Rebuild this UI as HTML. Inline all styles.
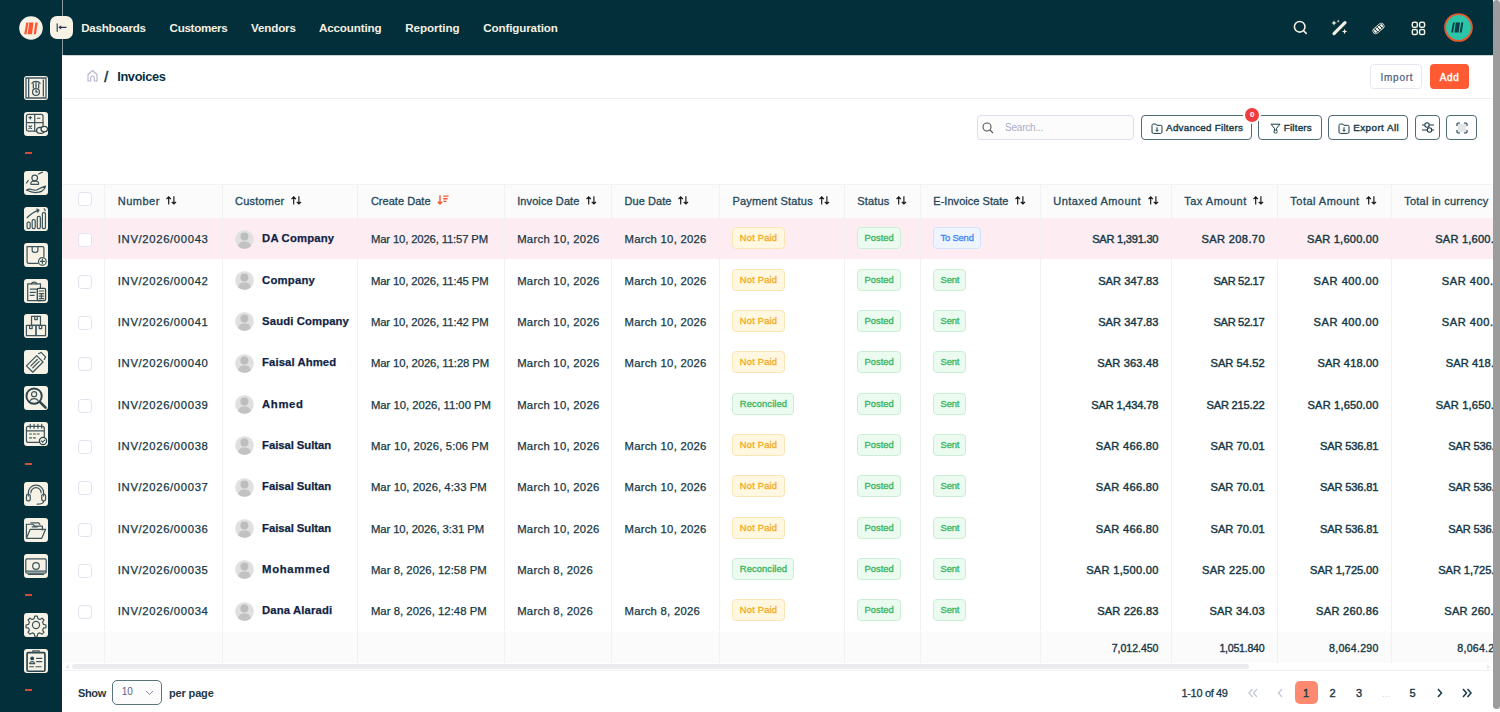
<!DOCTYPE html><html><head><meta charset="utf-8"><style>
*{box-sizing:border-box;margin:0;padding:0}
html,body{width:1500px;height:712px;overflow:hidden;background:#fff;font-family:"Liberation Sans",sans-serif}
.abs{position:absolute}
.t{white-space:pre}
#sb{position:absolute;left:0;top:0;width:62px;height:712px;background:#032f3b}
#hd{position:absolute;left:62px;top:0;width:1431px;height:54.5px;background:#032f3b;box-shadow:0 0.5px 1px rgba(0,30,40,.2)}
.nav{position:absolute;top:19.5px;color:#f5f0e3;font-size:11.6px;font-weight:700;line-height:16px;white-space:nowrap}
.sic{position:absolute;left:24px;width:24px;height:24px;background:#f6f2e5;border-radius:3px}
.sic svg{position:absolute;left:0;top:0}
.dash{position:absolute;left:25.1px;width:6.9px;height:2.4px;background:#d44c36}
#vsb{position:absolute;left:1493px;top:0;width:7px;height:708.5px;background:#9c9c9c;border-radius:3.5px}
.tb{position:absolute;top:115.3px;height:25px;border:1.3px solid #4f6c74;border-radius:4px;background:#fff;color:#173a46;font-size:9.8px;font-weight:400;line-height:24px;white-space:nowrap;-webkit-text-stroke:0.4px #173a46}
.tb svg{position:absolute}
#tbl{position:absolute;left:62px;top:184px;width:1431px;height:479px;overflow:hidden}
.row{position:absolute;left:0;width:1457px;display:flex}
.c{flex:none;position:relative;height:100%;border-left:1px solid #f1f1f4;display:flex;align-items:center;padding:0 12.4px;white-space:nowrap;overflow:hidden}
.c:first-child{border-left:none;justify-content:center;padding:0}
.th .c{color:#24475a;font-size:11px;line-height:14px;padding-top:1px;-webkit-text-stroke:0.3px #24475a}
.tr .c{color:#163846;font-size:11.3px;line-height:14px;padding-top:2px;-webkit-text-stroke:0.25px #163846}
.r{justify-content:flex-end}
.amt{font-weight:400;font-size:11.1px;-webkit-text-stroke:0.42px #173a46}
.si{margin-left:6.5px;flex:none;margin-top:-2px}
.cb{width:14px;height:14px;border:1px solid #e2e2ee;border-radius:3.5px;background:#fff;position:relative;left:1.8px;top:1px}
.th .cb{top:-2.3px}
.av{flex:none;margin-right:8px;margin-top:0px}
.cn{font-weight:700;color:#131a45;font-size:11.3px;position:relative;top:-1px}
.bd{display:inline-block;height:22px;line-height:20px;border:1px solid;border-radius:4px;font-size:9.4px;padding:0 6.3px;font-weight:400;margin-top:-2px;-webkit-text-stroke:0.3px currentColor}
.np{background:#fff7df;border-color:#fbe6b3;color:#f3ab22}
.gr{background:#ebfbef;border-color:#cdeed6;color:#36b45e}
.bl{background:#eef5ff;border-color:#d3e2fa;color:#3f86f2}
.pg{position:absolute;top:681.3px;width:23px;height:23px;line-height:24px;text-align:center;font-size:11px;color:#1d3a46;font-weight:400;-webkit-text-stroke:0.4px #1d3a46}
.tot{-webkit-text-stroke:0.35px #173a46;font-size:10.6px}
</style></head><body>

<div id="sb">
<div class="sic" style="top:76px"><svg width="24" height="24" viewBox="3 3 18 18"><path d="M4.5 4.5h15v15h-15z" fill="none" stroke="#3d555d" stroke-width="0.95" stroke-linecap="round" stroke-linejoin="round"/><path d="M6.5 5v14M17.5 6v12M9 8.5c1-2 5-2 6 0M10 9v3M12 8v4M14 9v3" fill="none" stroke="#3d555d" stroke-width="0.95" stroke-linecap="round" stroke-linejoin="round"/><circle cx="12" cy="15" r="2.6" fill="none" stroke="#3d555d" stroke-width="0.95" stroke-linecap="round" stroke-linejoin="round"/><path d="M12 13.6v1.4h1" fill="none" stroke="#3d555d" stroke-width="0.95" stroke-linecap="round" stroke-linejoin="round"/></svg></div>
<div class="sic" style="top:111.7px"><svg width="24" height="24" viewBox="2.6 2.6 18.8 18.8"><rect x="4.5" y="4.5" width="13" height="13" rx="1.5" fill="none" stroke="#3d555d" stroke-width="0.95" stroke-linecap="round" stroke-linejoin="round"/><path d="M11 4.5v13M4.5 11h13M6.5 7h2M7.5 6v2M13 7.5h2M6.5 13.5l2 2M8.5 13.5l-2 2" fill="none" stroke="#3d555d" stroke-width="0.95" stroke-linecap="round" stroke-linejoin="round"/><ellipse cx="15.5" cy="17" rx="3" ry="2.3" fill="#f6f2e5" stroke="#2c4650"/><ellipse cx="18.5" cy="16" rx="2.6" ry="2.1" fill="#f6f2e5" stroke="#2c4650"/></svg></div>
<div class="sic" style="top:171px"><svg width="24" height="24" viewBox="2.6 2.6 18.8 18.8"><circle cx="11" cy="8" r="2.2" fill="none" stroke="#3d555d" stroke-width="0.95" stroke-linecap="round" stroke-linejoin="round"/><path d="M8 12c0-2 6-2 6 0v1H8z" fill="none" stroke="#3d555d" stroke-width="0.95" stroke-linecap="round" stroke-linejoin="round"/><path d="M4.5 17.5c3-2 6 1 8 0s4-2 7-3c-1 3-4 5-8 5-3 0-5-1-7-2z" fill="none" stroke="#3d555d" stroke-width="0.95" stroke-linecap="round" stroke-linejoin="round"/><path d="M14 5l3-1.5M6 10l-1.5 2" fill="none" stroke="#3d555d" stroke-width="0.95" stroke-linecap="round" stroke-linejoin="round"/></svg></div>
<div class="sic" style="top:207px"><svg width="24" height="24" viewBox="2.6 2.6 18.8 18.8"><rect x="5" y="14.5" width="2.4" height="5" rx="1" fill="none" stroke="#3d555d" stroke-width="0.95" stroke-linecap="round" stroke-linejoin="round"/><rect x="9" y="12.5" width="2.4" height="7" rx="1" fill="none" stroke="#3d555d" stroke-width="0.95" stroke-linecap="round" stroke-linejoin="round"/><rect x="13" y="10" width="2.4" height="9.5" rx="1" fill="none" stroke="#3d555d" stroke-width="0.95" stroke-linecap="round" stroke-linejoin="round"/><rect x="17" y="7" width="2.4" height="12.5" rx="1" fill="none" stroke="#3d555d" stroke-width="0.95" stroke-linecap="round" stroke-linejoin="round"/><path d="M5 11c3-3 6-5 9-6M12.5 4.2l1.8.8-1 1.6M18.5 4l.7 1.5" fill="none" stroke="#3d555d" stroke-width="0.95" stroke-linecap="round" stroke-linejoin="round"/></svg></div>
<div class="sic" style="top:242.7px"><svg width="24" height="24" viewBox="2.6 2.6 18.8 18.8"><path d="M5 5.5h12c.8 0 1.2.5 1.2 1.2v6.5M5 5.5v11.5c0 .8.5 1.5 1.5 1.5h7" fill="none" stroke="#3d555d" stroke-width="0.95" stroke-linecap="round" stroke-linejoin="round"/><path d="M9 6v2.5c0 2 4.5 2 4.5 0V6" fill="none" stroke="#3d555d" stroke-width="0.95" stroke-linecap="round" stroke-linejoin="round"/><circle cx="17" cy="17" r="3" fill="none" stroke="#3d555d" stroke-width="0.95" stroke-linecap="round" stroke-linejoin="round"/><path d="M17 15.5v3M15.5 17h3" fill="none" stroke="#3d555d" stroke-width="0.95" stroke-linecap="round" stroke-linejoin="round"/></svg></div>
<div class="sic" style="top:278.6px"><svg width="24" height="24" viewBox="2.6 2.6 18.8 18.8"><path d="M5.5 6.5h10v13h-10z" fill="none" stroke="#3d555d" stroke-width="0.95" stroke-linecap="round" stroke-linejoin="round"/><path d="M8.5 6.5c0-2 4-2 4 0M7.5 10.5h5M7.5 13h4M7.5 15.5h3" fill="none" stroke="#3d555d" stroke-width="0.95" stroke-linecap="round" stroke-linejoin="round"/><rect x="13" y="10" width="6.5" height="9.5" rx="1" fill="#f6f2e5" stroke="#2c4650"/><path d="M14.5 12h3.5M14.5 14h3.5M14.5 16h3.5M14.5 18h3.5M16.2 14v4" fill="none" stroke="#3d555d" stroke-width="0.95" stroke-linecap="round" stroke-linejoin="round"/></svg></div>
<div class="sic" style="top:314.4px"><svg width="24" height="24" viewBox="2.6 2.6 18.8 18.8"><rect x="8.5" y="4.5" width="7" height="7" fill="none" stroke="#3d555d" stroke-width="0.95" stroke-linecap="round" stroke-linejoin="round"/><rect x="4.5" y="11.5" width="7.5" height="8" fill="none" stroke="#3d555d" stroke-width="0.95" stroke-linecap="round" stroke-linejoin="round"/><rect x="12" y="11.5" width="7.5" height="8" fill="none" stroke="#3d555d" stroke-width="0.95" stroke-linecap="round" stroke-linejoin="round"/><path d="M11 4.5v2.5h2V4.5M7 11.5v2.5h2v-2.5M14.5 11.5v2.5h2v-2.5" fill="none" stroke="#3d555d" stroke-width="0.95" stroke-linecap="round" stroke-linejoin="round"/></svg></div>
<div class="sic" style="top:350.2px"><svg width="24" height="24" viewBox="2.6 2.6 18.8 18.8"><path d="M4.5 15l8-8 5 5-8 8z" fill="none" stroke="#3d555d" stroke-width="0.95" stroke-linecap="round" stroke-linejoin="round"/><path d="M14 5.5l2-1 3.5 3.5-1 2M8 15l5-5M9.5 16.5l5-5" fill="none" stroke="#3d555d" stroke-width="0.95" stroke-linecap="round" stroke-linejoin="round"/></svg></div>
<div class="sic" style="top:386px"><svg width="24" height="24" viewBox="2.6 2.6 18.8 18.8"><circle cx="10.5" cy="10.5" r="6" stroke="#2c4650" stroke-width="1.5" fill="none"/><path d="M15 15l4.5 4.5" stroke="#2c4650" stroke-width="2" stroke-linecap="round"/><circle cx="10.5" cy="9" r="2" fill="none" stroke="#3d555d" stroke-width="0.95" stroke-linecap="round" stroke-linejoin="round"/><path d="M7.5 14c1-2 5-2 6 0" fill="none" stroke="#3d555d" stroke-width="0.95" stroke-linecap="round" stroke-linejoin="round"/></svg></div>
<div class="sic" style="top:421.8px"><svg width="24" height="24" viewBox="2.6 2.6 18.8 18.8"><rect x="4.5" y="6" width="14" height="12.5" rx="1.5" fill="none" stroke="#3d555d" stroke-width="0.95" stroke-linecap="round" stroke-linejoin="round"/><path d="M4.5 9.5h14M7.5 4.5v3M10.5 4.5v3M13.5 4.5v3M16.5 4.5v3M7 12h1.5M10 12h1.5M13 12h1.5M7 15h1.5M10 15h1.5" fill="none" stroke="#3d555d" stroke-width="0.95" stroke-linecap="round" stroke-linejoin="round"/><circle cx="17.5" cy="17.5" r="2.8" fill="#f6f2e5" stroke="#2c4650"/><path d="M16.3 17.5l.9.9 1.6-1.6" fill="none" stroke="#3d555d" stroke-width="0.95" stroke-linecap="round" stroke-linejoin="round"/></svg></div>
<div class="sic" style="top:481.7px"><svg width="24" height="24" viewBox="2.6 2.6 18.8 18.8"><path d="M6 13.5V11a6 6 0 0 1 12 0v2.5" fill="none" stroke="#3d555d" stroke-width="0.95" stroke-linecap="round" stroke-linejoin="round"/><rect x="4.5" y="12" width="3" height="5.5" rx="1.5" fill="none" stroke="#3d555d" stroke-width="0.95" stroke-linecap="round" stroke-linejoin="round"/><rect x="16.5" y="12" width="3" height="5.5" rx="1.5" fill="none" stroke="#3d555d" stroke-width="0.95" stroke-linecap="round" stroke-linejoin="round"/><path d="M18 17.5c0 2-2 2.5-5 2.5" fill="none" stroke="#3d555d" stroke-width="0.95" stroke-linecap="round" stroke-linejoin="round"/><path d="M8 11a4 4 0 0 1 8 0" fill="none" stroke="#3d555d" stroke-width="0.95" stroke-linecap="round" stroke-linejoin="round"/></svg></div>
<div class="sic" style="top:517.7px"><svg width="24" height="24" viewBox="2.6 2.6 18.8 18.8"><path d="M4.5 7.5h5l1.5 1.5h6v3" fill="none" stroke="#3d555d" stroke-width="0.95" stroke-linecap="round" stroke-linejoin="round"/><path d="M4.5 7.5v11h12l3-7h-12l-3 7" fill="none" stroke="#3d555d" stroke-width="0.95" stroke-linecap="round" stroke-linejoin="round"/><path d="M8 6.5h6l1 1M9 9.5h4" fill="none" stroke="#3d555d" stroke-width="0.95" stroke-linecap="round" stroke-linejoin="round"/></svg></div>
<div class="sic" style="top:553.6px"><svg width="24" height="24" viewBox="2.6 2.6 18.8 18.8"><rect x="4" y="6.5" width="16" height="11" rx="1" fill="none" stroke="#3d555d" stroke-width="0.95" stroke-linecap="round" stroke-linejoin="round"/><circle cx="12" cy="12" r="2.6" fill="none" stroke="#3d555d" stroke-width="0.95" stroke-linecap="round" stroke-linejoin="round"/><path d="M4.5 16h15M6 18.5h12" fill="none" stroke="#3d555d" stroke-width="0.95" stroke-linecap="round" stroke-linejoin="round"/></svg></div>
<div class="sic" style="top:613px"><svg width="24" height="24" viewBox="2.6 2.6 18.8 18.8"><path d="M11 5h2l.5 2 1.5.7 1.8-1 1.4 1.4-1 1.8.6 1.6 2 .5v2l-2 .5-.6 1.5 1 1.8-1.4 1.4-1.8-1-1.5.6-.5 2h-2l-.5-2-1.5-.6-1.8 1-1.4-1.4 1-1.8-.6-1.5-2-.5v-2l2-.5.6-1.6-1-1.8 1.4-1.4 1.8 1 1.5-.7z" fill="none" stroke="#3d555d" stroke-width="0.95" stroke-linecap="round" stroke-linejoin="round"/><circle cx="12" cy="12" r="2.8" fill="none" stroke="#3d555d" stroke-width="0.95" stroke-linecap="round" stroke-linejoin="round"/></svg></div>
<div class="sic" style="top:649px"><svg width="24" height="24" viewBox="2.6 2.6 18.8 18.8"><rect x="5" y="5.5" width="14" height="14.5" rx="1" stroke="#2c4650" stroke-width="1.3" fill="none"/><path d="M9.5 5.5V4h5v1.5" fill="none" stroke="#3d555d" stroke-width="0.95" stroke-linecap="round" stroke-linejoin="round"/><circle cx="9" cy="10" r="1.5" fill="#2c4650"/><path d="M7 14c.5-2 3.5-2 4 0zM12.5 10h4M12.5 12.5h4M7 16.5h3M12 16.5h4" fill="none" stroke="#3d555d" stroke-width="0.95" stroke-linecap="round" stroke-linejoin="round"/></svg></div>
<div class="dash" style="top:151.7px"></div>
<div class="dash" style="top:462.5px"></div>
<div class="dash" style="top:593.7px"></div>
<div class="dash" style="top:689px"></div>
</div>
<div id="hd"></div><div class="abs" style="left:0;top:0;width:1493px;height:54.5px">
<div class="abs" style="left:61.5px;top:0;width:1px;height:54.5px;background:#8c9ca2"></div>
<svg class="abs" style="left:19.4px;top:15.7px" width="24" height="24" viewBox="0 0 24 24"><circle cx="12" cy="12" r="11.8" fill="#f6f2e5"/><path d="M7.3 6.5h2.2L7.5 18.3H5.2z M10.2 6.5h4.4l-1.6 11.8H8.6z M16.4 6.5h2.3l-1.7 11.8h-2.3z" fill="#ff5533"/></svg>
<div class="abs" style="left:50.1px;top:15.9px;width:23.4px;height:23.6px;border-radius:7px;background:#f6f2e5"></div>
<svg class="abs" style="left:50.1px;top:15.9px" width="24" height="24" viewBox="0 0 24 24"><path d="M7.2 7.4v8.4M16.5 11.4H9" fill="none" stroke="#1d3350" stroke-width="1.1"/><path d="M8.4 11.4l2.8-2.2v4.4z" fill="#1d3350"/></svg>
<div class="nav" style="left:81.2px"><span id="t1" class="t " style="letter-spacing:-0.246px;">Dashboards</span></div>
<div class="nav" style="left:169.6px"><span id="t2" class="t " style="letter-spacing:-0.308px;">Customers</span></div>
<div class="nav" style="left:251.0px"><span id="t3" class="t " style="letter-spacing:-0.142px;">Vendors</span></div>
<div class="nav" style="left:318.9px"><span id="t4" class="t " style="letter-spacing:-0.118px;">Accounting</span></div>
<div class="nav" style="left:405.2px"><span id="t5" class="t " style="letter-spacing:-0.044px;">Reporting</span></div>
<div class="nav" style="left:483.2px"><span id="t6" class="t " style="letter-spacing:-0.108px;">Configuration</span></div>
<svg class="abs" style="left:1292px;top:19px" width="16" height="16" viewBox="0 0 16 16"><circle cx="7.7" cy="7.8" r="5.3" fill="none" stroke="#f3efe2" stroke-width="1.6"/><path d="M11.6 11.8l2.6 2.6" stroke="#f3efe2" stroke-width="1.6" stroke-linecap="round"/></svg>
<svg class="abs" style="left:1330px;top:19px" width="18" height="17" viewBox="0 0 18 17"><path d="M15 3.6L4 14.6" stroke="#f3efe2" stroke-width="3.2" stroke-linecap="round"/><path d="M4 1.2l.75 2 2 .75-2 .75L4 6.7l-.75-2-2-.75 2-.75zM8.2 0.6l.45 1.1 1.1.45-1.1.45-.45 1.1-.45-1.1-1.1-.45 1.1-.45zM14.6 9.8l.75 2 2 .75-2 .75-.75 2-.75-2-2-.75 2-.75z" fill="#f3efe2"/></svg>
<svg class="abs" style="left:1371px;top:20.5px" width="15" height="15" viewBox="0 0 15 15"><g transform="rotate(-42 7.5 7.5)"><rect x="0.6" y="4.3" width="13.8" height="6.4" rx="3.2" fill="#f3efe2"/><path d="M4.6 5.2v4.6M7.5 5.2v4.6M10.4 5.2v4.6" stroke="#032f3b" stroke-width="0.9"/><rect x="1.6" y="5.3" width="11.8" height="4.4" rx="2.2" fill="none" stroke="#032f3b" stroke-width="0.7"/></g></svg>
<svg class="abs" style="left:1410.5px;top:20.8px" width="15" height="15" viewBox="0 0 15 15"><rect x="1.3" y="1.3" width="5" height="5" rx="1.6" fill="none" stroke="#f3efe2" stroke-width="1.5"/><rect x="8.6" y="1.3" width="5" height="5" rx="1.6" fill="none" stroke="#f3efe2" stroke-width="1.5"/><rect x="1.3" y="8.6" width="5" height="5" rx="1.6" fill="none" stroke="#f3efe2" stroke-width="1.5"/><rect x="8.6" y="8.6" width="5" height="5" rx="1.6" fill="none" stroke="#f3efe2" stroke-width="1.5"/></svg>
<svg class="abs" style="left:1444.3px;top:13.2px" width="29" height="29" viewBox="0 0 29 29"><circle cx="14.5" cy="14.5" r="13.4" fill="#2dc5a8" stroke="#e4582e" stroke-width="1.9"/><path d="M9 9.5h1.8L9 19.5H7.2z M11.8 9.5h4.2l-1.4 10h-4.2z M17.3 9.5h2l-1.6 10h-2z" fill="#0a3d48"/></svg>
</div>
<div id="vsb"></div>
<div class="abs" style="left:62px;top:98.2px;width:1431px;height:1px;background:#efefef"></div>
<svg class="abs" style="left:85.5px;top:69px" width="13" height="13" viewBox="0 0 13 13"><path d="M2 12V5.5L6.5 1.5L11 5.5V12H8.3V8.8a1.8 1.8 0 0 0-3.6 0V12z" fill="none" stroke="#b4b3cf" stroke-width="1.1" stroke-linejoin="round"/></svg>
<div class="abs" style="left:104.3px;top:70px;font-size:14px;line-height:14px;font-weight:400;color:#05303f;-webkit-text-stroke:0.5px #05303f">/</div>
<div class="abs" style="left:117.2px;top:70px;font-size:12.8px;line-height:14px;font-weight:700;color:#05303f"><span id="t7" class="t " style="letter-spacing:-0.346px;">Invoices</span></div>
<div class="abs" style="left:1369.6px;top:64.2px;width:52px;height:25px;border:1px solid #e6e7f0;border-radius:4px;color:#4b5a7c;font-size:10px;line-height:25px;padding-left:10px;-webkit-text-stroke:0.2px #4b5a7c"><span id="t8" class="t " style="letter-spacing:0.711px;">Import</span></div>
<div class="abs" style="left:1429.8px;top:64.2px;width:39.4px;height:25px;border-radius:4px;background:#ff5a34;color:#fff;font-size:10px;font-weight:400;-webkit-text-stroke:0.4px #fff;line-height:27px;padding-left:10px"><span id="t9" class="t " style="letter-spacing:0.652px;">Add</span></div>
<div class="abs" style="left:976.6px;top:115.2px;width:157.6px;height:24.8px;border:1px solid #dde0ec;border-radius:4px;background:#fcfcfd"></div>
<svg class="abs" style="left:982px;top:122px" width="12" height="12" viewBox="0 0 12 12"><circle cx="5" cy="5" r="4" fill="none" stroke="#555" stroke-width="1.1"/><path d="M8 8l3 3" stroke="#555" stroke-width="1.1"/></svg>
<div class="abs" style="left:1005px;top:121px;font-size:10px;color:#a9adc9;line-height:14px"><span id="t10" class="t " style="letter-spacing:-0.204px;">Search...</span></div>
<div class="tb" style="left:1140.6px;width:111.7px"><svg style="left:9.5px;top:6.5px" width="12" height="11" viewBox="0 0 12 11"><path d="M1 2.5c0-.8.5-1.5 1.3-1.5h2.5l1 1.3h4c.7 0 1.2.5 1.2 1.2v5.5c0 .8-.5 1.4-1.3 1.4H2.3C1.5 10.4 1 9.8 1 9z" fill="none" stroke="#173a46" stroke-width="1"/><path d="M6 4.2v4M4.5 6.8L6 8.3l1.5-1.5" fill="none" stroke="#173a46" stroke-width="1"/></svg><span style="position:absolute;left:24.5px"><span id="t11" class="t " style="letter-spacing:0.262px;">Advanced Filters</span></span></div>
<div class="tb" style="left:1258.3px;width:63.4px"><svg style="left:10.5px;top:6.5px" width="11" height="11" viewBox="0 0 11 11"><path d="M1 1.2h9L6.6 5.3v2.2L4.4 9.5V5.3z" fill="none" stroke="#173a46" stroke-width="1"/><circle cx="5.6" cy="8.6" r="1.6" fill="#fff" stroke="#173a46" stroke-width="0.9"/></svg><span style="position:absolute;left:24.5px"><span id="t12" class="t " style="letter-spacing:0.205px;">Filters</span></span></div>
<div class="tb" style="left:1328.2px;width:80.2px"><svg style="left:9px;top:6.5px" width="12" height="11" viewBox="0 0 12 11"><path d="M1 2.5c0-.8.5-1.5 1.3-1.5h2.5l1 1.3h4c.7 0 1.2.5 1.2 1.2v5.5c0 .8-.5 1.4-1.3 1.4H2.3C1.5 10.4 1 9.8 1 9z" fill="none" stroke="#173a46" stroke-width="1"/><path d="M6 4.2v4M4.5 6.8L6 8.3l1.5-1.5" fill="none" stroke="#173a46" stroke-width="1"/></svg><span style="position:absolute;left:24px"><span id="t13" class="t " style="letter-spacing:0.468px;">Export All</span></span></div>
<div class="tb" style="left:1415px;width:24.6px"><svg style="left:4.5px;top:5px" width="14" height="13" viewBox="0 0 14 13"><path d="M1 4h2.5M8.5 4H13M1 9h5.5M10.8 9H13" stroke="#173a46" stroke-width="1.1"/><circle cx="6" cy="4" r="2.2" fill="none" stroke="#173a46" stroke-width="1.1"/><circle cx="8.5" cy="9" r="2.2" fill="none" stroke="#173a46" stroke-width="1.1"/></svg></div>
<div class="tb" style="left:1446px;width:31.4px"><svg style="left:9px;top:5.5px" width="12" height="12" viewBox="0 0 12 12"><rect x="2" y="2" width="8" height="8" fill="#e3e6e8"/><path d="M1 4V2.2C1 1.5 1.5 1 2.2 1H4M8 1h1.8c.7 0 1.2.5 1.2 1.2V4M11 8v1.8c0 .7-.5 1.2-1.2 1.2H8M4 11H2.2C1.5 11 1 10.5 1 9.8V8" fill="none" stroke="#173a46" stroke-width="1.1"/></svg></div>
<div class="abs" style="left:1243.3px;top:106px;width:18px;height:18px;border-radius:50%;background:#ef3d3d;border:2px solid #fff;color:#fff;font-size:8px;font-weight:700;text-align:center;line-height:14px">0</div>
<div id="tbl">
<div class="row th" style="top:0px;height:33.5px;background:#fbfbfb"><div class="c" style="width:42.400000000000006px"><div class="cb"></div></div><div class="c" style="width:117.29999999999998px"><span id="t14" class="t " style="letter-spacing:0.495px;">Number</span><svg class="si" width="11" height="9" viewBox="0 0 11 9"><path d="M2.7 8.6V0.9M0.5 3.1L2.7 0.9L4.9 3.1M7.9 0.3V8M5.7 5.8L7.9 8L10.1 5.8" fill="none" stroke="#151515" stroke-width="1.15"/></svg></div><div class="c" style="width:135.8px"><span id="t15" class="t " style="letter-spacing:0.202px;">Customer</span><svg class="si" width="11" height="9" viewBox="0 0 11 9"><path d="M2.7 8.6V0.9M0.5 3.1L2.7 0.9L4.9 3.1M7.9 0.3V8M5.7 5.8L7.9 8L10.1 5.8" fill="none" stroke="#151515" stroke-width="1.15"/></svg></div><div class="c" style="width:146.3px"><span id="t16" class="t " style="letter-spacing:0.039px;">Create Date</span><svg class="si" width="12" height="10" viewBox="0 0 12 10"><path d="M3 0.3V9M0.8 6.8L3 9L5.2 6.8M6.3 1.1H11.6M6.3 3.7H10.6M6.3 6.3H9.4" fill="none" stroke="#f0562e" stroke-width="1.35"/></svg></div><div class="c" style="width:107.30000000000001px"><span id="t17" class="t " style="letter-spacing:0.095px;">Invoice Date</span><svg class="si" width="11" height="9" viewBox="0 0 11 9"><path d="M2.7 8.6V0.9M0.5 3.1L2.7 0.9L4.9 3.1M7.9 0.3V8M5.7 5.8L7.9 8L10.1 5.8" fill="none" stroke="#151515" stroke-width="1.15"/></svg></div><div class="c" style="width:108.0px"><span id="t18" class="t " style="letter-spacing:0.074px;">Due Date</span><svg class="si" width="11" height="9" viewBox="0 0 11 9"><path d="M2.7 8.6V0.9M0.5 3.1L2.7 0.9L4.9 3.1M7.9 0.3V8M5.7 5.8L7.9 8L10.1 5.8" fill="none" stroke="#151515" stroke-width="1.15"/></svg></div><div class="c" style="width:124.69999999999993px"><span id="t19" class="t " style="letter-spacing:0.196px;">Payment Status</span><svg class="si" width="11" height="9" viewBox="0 0 11 9"><path d="M2.7 8.6V0.9M0.5 3.1L2.7 0.9L4.9 3.1M7.9 0.3V8M5.7 5.8L7.9 8L10.1 5.8" fill="none" stroke="#151515" stroke-width="1.15"/></svg></div><div class="c" style="width:76.10000000000002px"><span id="t20" class="t " style="letter-spacing:0.202px;">Status</span><svg class="si" width="11" height="9" viewBox="0 0 11 9"><path d="M2.7 8.6V0.9M0.5 3.1L2.7 0.9L4.9 3.1M7.9 0.3V8M5.7 5.8L7.9 8L10.1 5.8" fill="none" stroke="#151515" stroke-width="1.15"/></svg></div><div class="c" style="width:120.00000000000011px"><span id="t21" class="t " style="letter-spacing:0.043px;">E-Invoice State</span><svg class="si" width="11" height="9" viewBox="0 0 11 9"><path d="M2.7 8.6V0.9M0.5 3.1L2.7 0.9L4.9 3.1M7.9 0.3V8M5.7 5.8L7.9 8L10.1 5.8" fill="none" stroke="#151515" stroke-width="1.15"/></svg></div><div class="c" style="width:131.0px"><span id="t22" class="t " style="letter-spacing:0.466px;">Untaxed Amount</span><svg class="si" width="11" height="9" viewBox="0 0 11 9"><path d="M2.7 8.6V0.9M0.5 3.1L2.7 0.9L4.9 3.1M7.9 0.3V8M5.7 5.8L7.9 8L10.1 5.8" fill="none" stroke="#151515" stroke-width="1.15"/></svg></div><div class="c" style="width:106.09999999999991px"><span id="t23" class="t " style="letter-spacing:0.502px;">Tax Amount</span><svg class="si" width="11" height="9" viewBox="0 0 11 9"><path d="M2.7 8.6V0.9M0.5 3.1L2.7 0.9L4.9 3.1M7.9 0.3V8M5.7 5.8L7.9 8L10.1 5.8" fill="none" stroke="#151515" stroke-width="1.15"/></svg></div><div class="c" style="width:113.79999999999995px"><span id="t24" class="t " style="letter-spacing:0.473px;">Total Amount</span><svg class="si" width="11" height="9" viewBox="0 0 11 9"><path d="M2.7 8.6V0.9M0.5 3.1L2.7 0.9L4.9 3.1M7.9 0.3V8M5.7 5.8L7.9 8L10.1 5.8" fill="none" stroke="#151515" stroke-width="1.15"/></svg></div><div class="c" style="width:128.20000000000005px"><span id="t25" class="t " style="letter-spacing:0.244px;">Total in currency</span></div></div>
<div class="abs" style="left:0;top:0;width:1457px;height:1px;background:#f2f2f2"></div>
<div class="row tr" style="top:33.5px;height:41.35px;background:#fdedf2"><div class="c" style="width:42.400000000000006px"><div class="cb"></div></div><div class="c" style="width:117.29999999999998px"><span id="t28" class="t " style="letter-spacing:0.650px;">INV/2026/00043</span></div><div class="c" style="width:135.8px"><svg class="av" width="19" height="19" viewBox="0 0 19 19"><circle cx="9.5" cy="9.5" r="9.4" fill="#e6e6e6"/><circle cx="9.5" cy="9.5" r="8.8" fill="#e0e0e0"/><circle cx="9.4" cy="6.6" r="4" fill="#bdbdbd"/><path d="M3.2 16.2C3.6 12.7 6.2 11.5 9.5 11.5S15.4 12.7 15.8 16.2A9 9 0 0 1 3.2 16.2Z" fill="#c2c2c2"/></svg><span id="t29" class="t cn" style="letter-spacing:0.154px;">DA Company</span></div><div class="c" style="width:146.3px"><span id="t30" class="t " style="letter-spacing:-0.146px;">Mar 10, 2026, 11:57 PM</span></div><div class="c" style="width:107.30000000000001px"><span id="t31" class="t " style="letter-spacing:0.277px;">March 10, 2026</span></div><div class="c" style="width:108.0px"><span id="t32" class="t " style="letter-spacing:0.262px;">March 10, 2026</span></div><div class="c" style="width:124.69999999999993px"><span class="bd np"><span id="t26" class="t " style="letter-spacing:0.190px;">Not Paid</span></span></div><div class="c" style="width:76.10000000000002px"><span class="bd gr"><span id="t33" class="t " style="letter-spacing:0.023px;">Posted</span></span></div><div class="c" style="width:120.00000000000011px"><span class="bd bl"><span id="t27" class="t " style="letter-spacing:-0.184px;">To Send</span></span></div><div class="c r" style="width:131.0px"><span id="t34" class="t amt" style="letter-spacing:-0.253px;margin-right:0.253px;">SAR 1,391.30</span></div><div class="c r" style="width:106.09999999999991px"><span id="t35" class="t amt" style="letter-spacing:0.364px;margin-right:-0.364px;">SAR 208.70</span></div><div class="c r" style="width:113.79999999999995px"><span id="t36" class="t amt" style="letter-spacing:0.202px;margin-right:-0.202px;">SAR 1,600.00</span></div><div class="c r" style="width:128.20000000000005px"><span id="t37" class="t amt" style="letter-spacing:0.202px;margin-right:-0.202px;">SAR 1,600.00</span></div></div>
<div class="row tr" style="top:74.85px;height:41.35px;background:#fff"><div class="c" style="width:42.400000000000006px"><div class="cb"></div></div><div class="c" style="width:117.29999999999998px"><span id="t40" class="t " style="letter-spacing:0.650px;">INV/2026/00042</span></div><div class="c" style="width:135.8px"><svg class="av" width="19" height="19" viewBox="0 0 19 19"><circle cx="9.5" cy="9.5" r="9.4" fill="#e6e6e6"/><circle cx="9.5" cy="9.5" r="8.8" fill="#e0e0e0"/><circle cx="9.4" cy="6.6" r="4" fill="#bdbdbd"/><path d="M3.2 16.2C3.6 12.7 6.2 11.5 9.5 11.5S15.4 12.7 15.8 16.2A9 9 0 0 1 3.2 16.2Z" fill="#c2c2c2"/></svg><span id="t41" class="t cn" style="letter-spacing:0.219px;">Company</span></div><div class="c" style="width:146.3px"><span id="t42" class="t " style="letter-spacing:-0.127px;">Mar 10, 2026, 11:45 PM</span></div><div class="c" style="width:107.30000000000001px"><span id="t43" class="t " style="letter-spacing:0.277px;">March 10, 2026</span></div><div class="c" style="width:108.0px"><span id="t44" class="t " style="letter-spacing:0.262px;">March 10, 2026</span></div><div class="c" style="width:124.69999999999993px"><span class="bd np"><span id="t38" class="t " style="letter-spacing:0.190px;">Not Paid</span></span></div><div class="c" style="width:76.10000000000002px"><span class="bd gr"><span id="t45" class="t " style="letter-spacing:0.023px;">Posted</span></span></div><div class="c" style="width:120.00000000000011px"><span class="bd gr"><span id="t39" class="t " style="letter-spacing:-0.166px;">Sent</span></span></div><div class="c r" style="width:131.0px"><span id="t46" class="t amt" style="letter-spacing:0.052px;margin-right:-0.052px;">SAR 347.83</span></div><div class="c r" style="width:106.09999999999991px"><span id="t47" class="t amt" style="letter-spacing:-0.320px;margin-right:0.320px;">SAR 52.17</span></div><div class="c r" style="width:113.79999999999995px"><span id="t48" class="t amt" style="letter-spacing:0.552px;margin-right:-0.552px;">SAR 400.00</span></div><div class="c r" style="width:128.20000000000005px"><span id="t49" class="t amt" style="letter-spacing:0.552px;margin-right:-0.552px;">SAR 400.00</span></div></div>
<div class="row tr" style="top:116.2px;height:41.35px;background:#fff"><div class="c" style="width:42.400000000000006px"><div class="cb"></div></div><div class="c" style="width:117.29999999999998px"><span id="t52" class="t " style="letter-spacing:0.650px;">INV/2026/00041</span></div><div class="c" style="width:135.8px"><svg class="av" width="19" height="19" viewBox="0 0 19 19"><circle cx="9.5" cy="9.5" r="9.4" fill="#e6e6e6"/><circle cx="9.5" cy="9.5" r="8.8" fill="#e0e0e0"/><circle cx="9.4" cy="6.6" r="4" fill="#bdbdbd"/><path d="M3.2 16.2C3.6 12.7 6.2 11.5 9.5 11.5S15.4 12.7 15.8 16.2A9 9 0 0 1 3.2 16.2Z" fill="#c2c2c2"/></svg><span id="t53" class="t cn" style="letter-spacing:0.119px;">Saudi Company</span></div><div class="c" style="width:146.3px"><span id="t54" class="t " style="letter-spacing:-0.127px;">Mar 10, 2026, 11:42 PM</span></div><div class="c" style="width:107.30000000000001px"><span id="t55" class="t " style="letter-spacing:0.277px;">March 10, 2026</span></div><div class="c" style="width:108.0px"><span id="t56" class="t " style="letter-spacing:0.262px;">March 10, 2026</span></div><div class="c" style="width:124.69999999999993px"><span class="bd np"><span id="t50" class="t " style="letter-spacing:0.190px;">Not Paid</span></span></div><div class="c" style="width:76.10000000000002px"><span class="bd gr"><span id="t57" class="t " style="letter-spacing:0.023px;">Posted</span></span></div><div class="c" style="width:120.00000000000011px"><span class="bd gr"><span id="t51" class="t " style="letter-spacing:-0.166px;">Sent</span></span></div><div class="c r" style="width:131.0px"><span id="t58" class="t amt" style="letter-spacing:0.052px;margin-right:-0.052px;">SAR 347.83</span></div><div class="c r" style="width:106.09999999999991px"><span id="t59" class="t amt" style="letter-spacing:-0.320px;margin-right:0.320px;">SAR 52.17</span></div><div class="c r" style="width:113.79999999999995px"><span id="t60" class="t amt" style="letter-spacing:0.552px;margin-right:-0.552px;">SAR 400.00</span></div><div class="c r" style="width:128.20000000000005px"><span id="t61" class="t amt" style="letter-spacing:0.552px;margin-right:-0.552px;">SAR 400.00</span></div></div>
<div class="row tr" style="top:157.55px;height:41.35px;background:#fff"><div class="c" style="width:42.400000000000006px"><div class="cb"></div></div><div class="c" style="width:117.29999999999998px"><span id="t64" class="t " style="letter-spacing:0.650px;">INV/2026/00040</span></div><div class="c" style="width:135.8px"><svg class="av" width="19" height="19" viewBox="0 0 19 19"><circle cx="9.5" cy="9.5" r="9.4" fill="#e6e6e6"/><circle cx="9.5" cy="9.5" r="8.8" fill="#e0e0e0"/><circle cx="9.4" cy="6.6" r="4" fill="#bdbdbd"/><path d="M3.2 16.2C3.6 12.7 6.2 11.5 9.5 11.5S15.4 12.7 15.8 16.2A9 9 0 0 1 3.2 16.2Z" fill="#c2c2c2"/></svg><span id="t65" class="t cn" style="letter-spacing:0.087px;">Faisal Ahmed</span></div><div class="c" style="width:146.3px"><span id="t66" class="t " style="letter-spacing:-0.099px;">Mar 10, 2026, 11:28 PM</span></div><div class="c" style="width:107.30000000000001px"><span id="t67" class="t " style="letter-spacing:0.277px;">March 10, 2026</span></div><div class="c" style="width:108.0px"><span id="t68" class="t " style="letter-spacing:0.262px;">March 10, 2026</span></div><div class="c" style="width:124.69999999999993px"><span class="bd np"><span id="t62" class="t " style="letter-spacing:0.190px;">Not Paid</span></span></div><div class="c" style="width:76.10000000000002px"><span class="bd gr"><span id="t69" class="t " style="letter-spacing:0.023px;">Posted</span></span></div><div class="c" style="width:120.00000000000011px"><span class="bd gr"><span id="t63" class="t " style="letter-spacing:-0.166px;">Sent</span></span></div><div class="c r" style="width:131.0px"><span id="t70" class="t amt" style="letter-spacing:0.164px;margin-right:-0.164px;">SAR 363.48</span></div><div class="c r" style="width:106.09999999999991px"><span id="t71" class="t amt" style="letter-spacing:0.055px;margin-right:-0.055px;">SAR 54.52</span></div><div class="c r" style="width:113.79999999999995px"><span id="t72" class="t amt" style="letter-spacing:0.108px;margin-right:-0.108px;">SAR 418.00</span></div><div class="c r" style="width:128.20000000000005px"><span id="t73" class="t amt" style="letter-spacing:0.108px;margin-right:-0.108px;">SAR 418.00</span></div></div>
<div class="row tr" style="top:198.9px;height:41.35px;background:#fff"><div class="c" style="width:42.400000000000006px"><div class="cb"></div></div><div class="c" style="width:117.29999999999998px"><span id="t76" class="t " style="letter-spacing:0.650px;">INV/2026/00039</span></div><div class="c" style="width:135.8px"><svg class="av" width="19" height="19" viewBox="0 0 19 19"><circle cx="9.5" cy="9.5" r="9.4" fill="#e6e6e6"/><circle cx="9.5" cy="9.5" r="8.8" fill="#e0e0e0"/><circle cx="9.4" cy="6.6" r="4" fill="#bdbdbd"/><path d="M3.2 16.2C3.6 12.7 6.2 11.5 9.5 11.5S15.4 12.7 15.8 16.2A9 9 0 0 1 3.2 16.2Z" fill="#c2c2c2"/></svg><span id="t77" class="t cn" style="letter-spacing:0.626px;">Ahmed</span></div><div class="c" style="width:146.3px"><span id="t78" class="t " style="letter-spacing:-0.013px;">Mar 10, 2026, 11:00 PM</span></div><div class="c" style="width:107.30000000000001px"><span id="t79" class="t " style="letter-spacing:0.277px;">March 10, 2026</span></div><div class="c" style="width:108.0px"></div><div class="c" style="width:124.69999999999993px"><span class="bd gr"><span id="t74" class="t " style="letter-spacing:0.101px;">Reconciled</span></span></div><div class="c" style="width:76.10000000000002px"><span class="bd gr"><span id="t80" class="t " style="letter-spacing:0.023px;">Posted</span></span></div><div class="c" style="width:120.00000000000011px"><span class="bd gr"><span id="t75" class="t " style="letter-spacing:-0.166px;">Sent</span></span></div><div class="c r" style="width:131.0px"><span id="t81" class="t amt" style="letter-spacing:-0.162px;margin-right:0.162px;">SAR 1,434.78</span></div><div class="c r" style="width:106.09999999999991px"><span id="t82" class="t amt" style="letter-spacing:-0.192px;margin-right:0.192px;">SAR 215.22</span></div><div class="c r" style="width:113.79999999999995px"><span id="t83" class="t amt" style="letter-spacing:0.157px;margin-right:-0.157px;">SAR 1,650.00</span></div><div class="c r" style="width:128.20000000000005px"><span id="t84" class="t amt" style="letter-spacing:0.157px;margin-right:-0.157px;">SAR 1,650.00</span></div></div>
<div class="row tr" style="top:240.25px;height:41.35px;background:#fff"><div class="c" style="width:42.400000000000006px"><div class="cb"></div></div><div class="c" style="width:117.29999999999998px"><span id="t87" class="t " style="letter-spacing:0.650px;">INV/2026/00038</span></div><div class="c" style="width:135.8px"><svg class="av" width="19" height="19" viewBox="0 0 19 19"><circle cx="9.5" cy="9.5" r="9.4" fill="#e6e6e6"/><circle cx="9.5" cy="9.5" r="8.8" fill="#e0e0e0"/><circle cx="9.4" cy="6.6" r="4" fill="#bdbdbd"/><path d="M3.2 16.2C3.6 12.7 6.2 11.5 9.5 11.5S15.4 12.7 15.8 16.2A9 9 0 0 1 3.2 16.2Z" fill="#c2c2c2"/></svg><span id="t88" class="t cn" style="letter-spacing:-0.057px;">Faisal Sultan</span></div><div class="c" style="width:146.3px"><span id="t89" class="t " style="letter-spacing:0.144px;">Mar 10, 2026, 5:06 PM</span></div><div class="c" style="width:107.30000000000001px"><span id="t90" class="t " style="letter-spacing:0.277px;">March 10, 2026</span></div><div class="c" style="width:108.0px"><span id="t91" class="t " style="letter-spacing:0.262px;">March 10, 2026</span></div><div class="c" style="width:124.69999999999993px"><span class="bd np"><span id="t85" class="t " style="letter-spacing:0.190px;">Not Paid</span></span></div><div class="c" style="width:76.10000000000002px"><span class="bd gr"><span id="t92" class="t " style="letter-spacing:0.023px;">Posted</span></span></div><div class="c" style="width:120.00000000000011px"><span class="bd gr"><span id="t86" class="t " style="letter-spacing:-0.166px;">Sent</span></span></div><div class="c r" style="width:131.0px"><span id="t93" class="t amt" style="letter-spacing:0.330px;margin-right:-0.330px;">SAR 466.80</span></div><div class="c r" style="width:106.09999999999991px"><span id="t94" class="t amt" style="letter-spacing:0.055px;margin-right:-0.055px;">SAR 70.01</span></div><div class="c r" style="width:113.79999999999995px"><span id="t95" class="t amt" style="letter-spacing:-0.170px;margin-right:0.170px;">SAR 536.81</span></div><div class="c r" style="width:128.20000000000005px"><span id="t96" class="t amt" style="letter-spacing:-0.170px;margin-right:0.170px;">SAR 536.81</span></div></div>
<div class="row tr" style="top:281.6px;height:41.35px;background:#fff"><div class="c" style="width:42.400000000000006px"><div class="cb"></div></div><div class="c" style="width:117.29999999999998px"><span id="t99" class="t " style="letter-spacing:0.650px;">INV/2026/00037</span></div><div class="c" style="width:135.8px"><svg class="av" width="19" height="19" viewBox="0 0 19 19"><circle cx="9.5" cy="9.5" r="9.4" fill="#e6e6e6"/><circle cx="9.5" cy="9.5" r="8.8" fill="#e0e0e0"/><circle cx="9.4" cy="6.6" r="4" fill="#bdbdbd"/><path d="M3.2 16.2C3.6 12.7 6.2 11.5 9.5 11.5S15.4 12.7 15.8 16.2A9 9 0 0 1 3.2 16.2Z" fill="#c2c2c2"/></svg><span id="t100" class="t cn" style="letter-spacing:-0.057px;">Faisal Sultan</span></div><div class="c" style="width:146.3px"><span id="t101" class="t " style="letter-spacing:0.044px;">Mar 10, 2026, 4:33 PM</span></div><div class="c" style="width:107.30000000000001px"><span id="t102" class="t " style="letter-spacing:0.277px;">March 10, 2026</span></div><div class="c" style="width:108.0px"><span id="t103" class="t " style="letter-spacing:0.262px;">March 10, 2026</span></div><div class="c" style="width:124.69999999999993px"><span class="bd np"><span id="t97" class="t " style="letter-spacing:0.190px;">Not Paid</span></span></div><div class="c" style="width:76.10000000000002px"><span class="bd gr"><span id="t104" class="t " style="letter-spacing:0.023px;">Posted</span></span></div><div class="c" style="width:120.00000000000011px"><span class="bd gr"><span id="t98" class="t " style="letter-spacing:-0.166px;">Sent</span></span></div><div class="c r" style="width:131.0px"><span id="t105" class="t amt" style="letter-spacing:0.330px;margin-right:-0.330px;">SAR 466.80</span></div><div class="c r" style="width:106.09999999999991px"><span id="t106" class="t amt" style="letter-spacing:0.055px;margin-right:-0.055px;">SAR 70.01</span></div><div class="c r" style="width:113.79999999999995px"><span id="t107" class="t amt" style="letter-spacing:-0.170px;margin-right:0.170px;">SAR 536.81</span></div><div class="c r" style="width:128.20000000000005px"><span id="t108" class="t amt" style="letter-spacing:-0.170px;margin-right:0.170px;">SAR 536.81</span></div></div>
<div class="row tr" style="top:322.95px;height:41.35px;background:#fff"><div class="c" style="width:42.400000000000006px"><div class="cb"></div></div><div class="c" style="width:117.29999999999998px"><span id="t111" class="t " style="letter-spacing:0.650px;">INV/2026/00036</span></div><div class="c" style="width:135.8px"><svg class="av" width="19" height="19" viewBox="0 0 19 19"><circle cx="9.5" cy="9.5" r="9.4" fill="#e6e6e6"/><circle cx="9.5" cy="9.5" r="8.8" fill="#e0e0e0"/><circle cx="9.4" cy="6.6" r="4" fill="#bdbdbd"/><path d="M3.2 16.2C3.6 12.7 6.2 11.5 9.5 11.5S15.4 12.7 15.8 16.2A9 9 0 0 1 3.2 16.2Z" fill="#c2c2c2"/></svg><span id="t112" class="t cn" style="letter-spacing:-0.057px;">Faisal Sultan</span></div><div class="c" style="width:146.3px"><span id="t113" class="t " style="letter-spacing:-0.081px;">Mar 10, 2026, 3:31 PM</span></div><div class="c" style="width:107.30000000000001px"><span id="t114" class="t " style="letter-spacing:0.277px;">March 10, 2026</span></div><div class="c" style="width:108.0px"><span id="t115" class="t " style="letter-spacing:0.262px;">March 10, 2026</span></div><div class="c" style="width:124.69999999999993px"><span class="bd np"><span id="t109" class="t " style="letter-spacing:0.190px;">Not Paid</span></span></div><div class="c" style="width:76.10000000000002px"><span class="bd gr"><span id="t116" class="t " style="letter-spacing:0.023px;">Posted</span></span></div><div class="c" style="width:120.00000000000011px"><span class="bd gr"><span id="t110" class="t " style="letter-spacing:-0.166px;">Sent</span></span></div><div class="c r" style="width:131.0px"><span id="t117" class="t amt" style="letter-spacing:0.330px;margin-right:-0.330px;">SAR 466.80</span></div><div class="c r" style="width:106.09999999999991px"><span id="t118" class="t amt" style="letter-spacing:0.055px;margin-right:-0.055px;">SAR 70.01</span></div><div class="c r" style="width:113.79999999999995px"><span id="t119" class="t amt" style="letter-spacing:-0.170px;margin-right:0.170px;">SAR 536.81</span></div><div class="c r" style="width:128.20000000000005px"><span id="t120" class="t amt" style="letter-spacing:-0.170px;margin-right:0.170px;">SAR 536.81</span></div></div>
<div class="row tr" style="top:364.3px;height:41.35px;background:#fff"><div class="c" style="width:42.400000000000006px"><div class="cb"></div></div><div class="c" style="width:117.29999999999998px"><span id="t123" class="t " style="letter-spacing:0.650px;">INV/2026/00035</span></div><div class="c" style="width:135.8px"><svg class="av" width="19" height="19" viewBox="0 0 19 19"><circle cx="9.5" cy="9.5" r="9.4" fill="#e6e6e6"/><circle cx="9.5" cy="9.5" r="8.8" fill="#e0e0e0"/><circle cx="9.4" cy="6.6" r="4" fill="#bdbdbd"/><path d="M3.2 16.2C3.6 12.7 6.2 11.5 9.5 11.5S15.4 12.7 15.8 16.2A9 9 0 0 1 3.2 16.2Z" fill="#c2c2c2"/></svg><span id="t124" class="t cn" style="letter-spacing:0.674px;">Mohammed</span></div><div class="c" style="width:146.3px"><span id="t125" class="t " style="letter-spacing:0.044px;">Mar 8, 2026, 12:58 PM</span></div><div class="c" style="width:107.30000000000001px"><span id="t126" class="t " style="letter-spacing:0.277px;">March 8, 2026</span></div><div class="c" style="width:108.0px"></div><div class="c" style="width:124.69999999999993px"><span class="bd gr"><span id="t121" class="t " style="letter-spacing:0.101px;">Reconciled</span></span></div><div class="c" style="width:76.10000000000002px"><span class="bd gr"><span id="t127" class="t " style="letter-spacing:0.023px;">Posted</span></span></div><div class="c" style="width:120.00000000000011px"><span class="bd gr"><span id="t122" class="t " style="letter-spacing:-0.166px;">Sent</span></span></div><div class="c r" style="width:131.0px"><span id="t128" class="t amt" style="letter-spacing:0.293px;margin-right:-0.293px;">SAR 1,500.00</span></div><div class="c r" style="width:106.09999999999991px"><span id="t129" class="t amt" style="letter-spacing:0.308px;margin-right:-0.308px;">SAR 225.00</span></div><div class="c r" style="width:113.79999999999995px"><span id="t130" class="t amt" style="letter-spacing:-0.071px;margin-right:0.071px;">SAR 1,725.00</span></div><div class="c r" style="width:128.20000000000005px"><span id="t131" class="t amt" style="letter-spacing:-0.071px;margin-right:0.071px;">SAR 1,725.00</span></div></div>
<div class="row tr" style="top:405.65000000000003px;height:41.35px;background:#fff"><div class="c" style="width:42.400000000000006px"><div class="cb"></div></div><div class="c" style="width:117.29999999999998px"><span id="t134" class="t " style="letter-spacing:0.650px;">INV/2026/00034</span></div><div class="c" style="width:135.8px"><svg class="av" width="19" height="19" viewBox="0 0 19 19"><circle cx="9.5" cy="9.5" r="9.4" fill="#e6e6e6"/><circle cx="9.5" cy="9.5" r="8.8" fill="#e0e0e0"/><circle cx="9.4" cy="6.6" r="4" fill="#bdbdbd"/><path d="M3.2 16.2C3.6 12.7 6.2 11.5 9.5 11.5S15.4 12.7 15.8 16.2A9 9 0 0 1 3.2 16.2Z" fill="#c2c2c2"/></svg><span id="t135" class="t cn" style="letter-spacing:0.122px;">Dana Alaradi</span></div><div class="c" style="width:146.3px"><span id="t136" class="t " style="letter-spacing:0.044px;">Mar 8, 2026, 12:48 PM</span></div><div class="c" style="width:107.30000000000001px"><span id="t137" class="t " style="letter-spacing:0.277px;">March 8, 2026</span></div><div class="c" style="width:108.0px"><span id="t138" class="t " style="letter-spacing:0.262px;">March 8, 2026</span></div><div class="c" style="width:124.69999999999993px"><span class="bd np"><span id="t132" class="t " style="letter-spacing:0.190px;">Not Paid</span></span></div><div class="c" style="width:76.10000000000002px"><span class="bd gr"><span id="t139" class="t " style="letter-spacing:0.023px;">Posted</span></span></div><div class="c" style="width:120.00000000000011px"><span class="bd gr"><span id="t133" class="t " style="letter-spacing:-0.166px;">Sent</span></span></div><div class="c r" style="width:131.0px"><span id="t140" class="t amt" style="letter-spacing:0.164px;margin-right:-0.164px;">SAR 226.83</span></div><div class="c r" style="width:106.09999999999991px"><span id="t141" class="t amt" style="letter-spacing:0.180px;margin-right:-0.180px;">SAR 34.03</span></div><div class="c r" style="width:113.79999999999995px"><span id="t142" class="t amt" style="letter-spacing:0.275px;margin-right:-0.275px;">SAR 260.86</span></div><div class="c r" style="width:128.20000000000005px"><span id="t143" class="t amt" style="letter-spacing:0.275px;margin-right:-0.275px;">SAR 260.86</span></div></div>
<div class="abs" style="left:0;top:447.6px;width:1457px;height:1px;background:#efeff2"></div>
<div class="row tr" style="top:448.1px;height:30.5px;background:#fbfbfc"><div class="c" style="width:42.400000000000006px"></div><div class="c" style="width:117.29999999999998px"></div><div class="c" style="width:135.8px"></div><div class="c" style="width:146.3px"></div><div class="c" style="width:107.30000000000001px"></div><div class="c" style="width:108.0px"></div><div class="c" style="width:124.69999999999993px"></div><div class="c" style="width:76.10000000000002px"></div><div class="c" style="width:120.00000000000011px"></div><div class="c r" style="width:131.0px"><span id="t144" class="t tot" style="letter-spacing:-0.055px;margin-right:0.055px;">7,012.450</span></div><div class="c r" style="width:106.09999999999991px"><span id="t145" class="t tot" style="letter-spacing:-0.255px;margin-right:0.255px;">1,051.840</span></div><div class="c r" style="width:113.79999999999995px"><span id="t146" class="t tot" style="letter-spacing:0.270px;margin-right:-0.270px;">8,064.290</span></div><div class="c r" style="width:128.20000000000005px"><span id="t147" class="t tot" style="letter-spacing:0.270px;margin-right:-0.270px;">8,064.290</span></div></div>
</div>
<svg class="abs" style="left:64px;top:663.5px" width="6" height="6" viewBox="0 0 6 6"><path d="M5 0.5L1.2 3 5 5.5z" fill="#e4e4ea"/></svg><svg class="abs" style="left:1486px;top:663.5px" width="6" height="6" viewBox="0 0 6 6"><path d="M1 0.5L4.8 3 1 5.5z" fill="#ececf0"/></svg>
<div class="abs" style="left:72px;top:664px;width:1177px;height:4.5px;border-radius:2.5px;background:#ececf0"></div>
<div class="abs" style="left:62px;top:670.3px;width:1431px;height:1px;background:#f0f0f0"></div>
<div class="abs" style="left:78px;top:686px;font-size:11px;font-weight:700;color:#1d3a46;line-height:14px"><span id="t148" class="t " style="letter-spacing:-0.348px;">Show</span></div>
<div class="abs" style="left:112.2px;top:680.2px;width:50.3px;height:25px;border:1.4px solid #5a747b;border-radius:5px;background:#fcfcfd;font-size:10px;color:#5a6285;padding-left:8.5px;line-height:22px">10</div>
<svg class="abs" style="left:145px;top:690px" width="9" height="6" viewBox="0 0 9 6"><path d="M1 1l3.5 3.5L8 1" fill="none" stroke="#8a8fb0" stroke-width="1"/></svg>
<div class="abs" style="left:169px;top:686px;font-size:11px;font-weight:700;color:#1d3a46;line-height:14px"><span id="t149" class="t " style="letter-spacing:-0.151px;">per page</span></div>
<div class="abs" style="left:1181.5px;top:686px;font-size:11px;color:#1d3a46;line-height:14px;-webkit-text-stroke:0.3px #1d3a46"><span id="t150" class="t " style="letter-spacing:-0.339px;">1-10 of 49</span></div>
<div class="pg" style="left:1294.6px;width:23.1px;background:#fd8a70;border-radius:5px">1</div>
<div class="pg" style="left:1321.0px">2</div>
<div class="pg" style="left:1347.5px">3</div>
<div class="pg" style="left:1401.0px">5</div>
<div class="pg" style="left:1374.5px;color:#c9ccd6;-webkit-text-stroke:0;font-size:9px;line-height:27px">…</div>
<svg class="abs" style="left:1247px;top:688px" width="12" height="10" viewBox="0 0 12 10"><path d="M5.5 1L2 5l3.5 4M10 1L6.5 5 10 9" fill="none" stroke="#c5c8dc" stroke-width="1.3"/></svg>
<svg class="abs" style="left:1275.5px;top:688px" width="8" height="10" viewBox="0 0 8 10"><path d="M6 1L2.5 5 6 9" fill="none" stroke="#c5c8dc" stroke-width="1.3"/></svg>
<svg class="abs" style="left:1435.5px;top:688px" width="8" height="10" viewBox="0 0 8 10"><path d="M2 1l3.5 4L2 9" fill="none" stroke="#173a46" stroke-width="1.5"/></svg>
<svg class="abs" style="left:1460.5px;top:688px" width="12" height="10" viewBox="0 0 12 10"><path d="M2 1l3.5 4L2 9M6.5 1L10 5 6.5 9" fill="none" stroke="#173a46" stroke-width="1.5"/></svg>
</body></html>
